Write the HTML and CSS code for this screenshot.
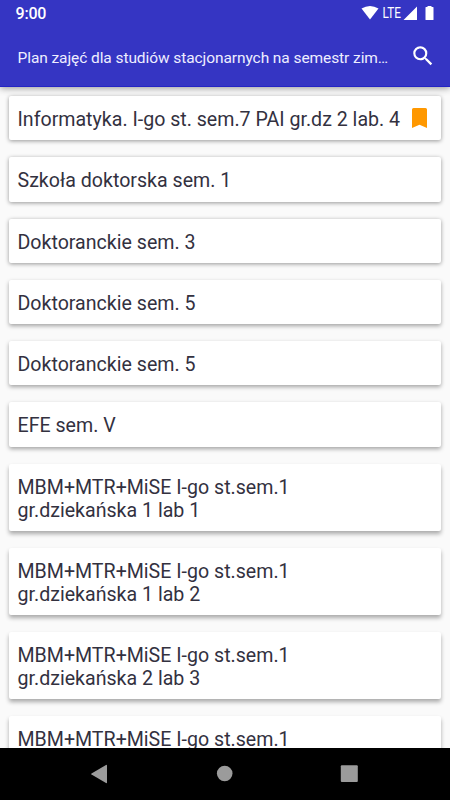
FILE: index.html
```html
<!DOCTYPE html>
<html lang="pl">
<head>
<meta charset="utf-8">
<title>Plan zajęć</title>
<link rel="stylesheet" href="styles.css">
</head>
<body>
<header class="top">
  <div class="status">
    <span class="time">9:00</span>
    <svg class="signals" width="76" height="20" viewBox="0 0 76 20" fill="#fff">
      <path d="M1.500 4.500Q10 -.500 18.500 4.500L10 15.500Z"/>
      <path d="M57 2.500V16H43.500ZM65.500 3h2V2h4v1h1.500q.5 0 .5.500v12q0 .5-.5.500h-7q-.5 0-.5-.5v-12q0-.5.500-.5Z"/>
      <text class="lte" x="22.500" y="14" textLength="18.500" lengthAdjust="spacingAndGlyphs">LTE</text>
    </svg>
  </div>
  <div class="bar">
    <h1 class="title">Plan zajęć dla studiów stacjonarnych na semestr zim…</h1>
    <svg class="search" width="26" height="26" viewBox="0 0 24 24" fill="#fff"><path d="M15.500 14h-.79l-.28-.27A6.471 6.471 0 0 0 16 9.500 6.500 6.500 0 1 0 9.500 16c1.610 0 3.090-.59 4.230-1.570l.27.28v.79l5 4.990L20.490 19l-4.990-5zm-6 0C7.010 14 5 11.990 5 9.500S7.010 5 9.500 5 14 7.010 14 9.500 11.990 14 9.500 14z"/></svg>
  </div>
</header>
<main class="list">
  <div class="card low"><span>Informatyka. I-go st. sem.7 PAI gr.dz 2 lab. 4</span>
    <svg class="mark" width="15" height="20" viewBox="0 0 15 20" fill="#ff9800"><path d="M1.500 0h12Q15 0 15 1.500V20L7.500 16.800 0 20V1.500Q0 0 1.500 0Z"/></svg></div>
  <div class="card low">Szkoła doktorska sem. 1</div>
  <div class="card low">Doktoranckie sem. 3</div>
  <div class="card">Doktoranckie sem. 5</div>
  <div class="card">Doktoranckie sem. 5</div>
  <div class="card">EFE sem. V</div>
  <div class="card deep">MBM+MTR+MiSE I-go st.sem.1<br>gr.dziekańska 1 lab 1</div>
  <div class="card deep">MBM+MTR+MiSE I-go st.sem.1<br>gr.dziekańska 1 lab 2</div>
  <div class="card deep">MBM+MTR+MiSE I-go st.sem.1<br>gr.dziekańska 2 lab 3</div>
  <div class="card deep">MBM+MTR+MiSE I-go st.sem.1</div>
</main>
<nav class="nav">
  <svg width="450" height="52" viewBox="0 0 450 52" fill="#9b9b9b"><path d="M107 17.500v17q0 1-1 .5L91.500 26.500q-.8-.5 0-1L106 17q1-.5 1 .5Z"/><circle cx="224.700" cy="25.500" r="7.800"/><rect x="340.800" y="17.200" width="17" height="16.800" rx="1"/></svg>
</nav>
</body>
</html>
```

FILE: styles.css
```css
* { box-sizing: border-box; }
body {
  margin: 0;
  width: 450px;
  height: 800px;
  overflow: hidden;
  display: flex;
  flex-direction: column;
  background: #fafafa;
  color: #33313f;
  font-family: Roboto, sans-serif;
}
.top {
  flex: none;
  height: 87px;
  background: #3535c3;
  border-bottom: 1px solid #2424c4;
  box-shadow: 0 1px 7px rgba(0, 0, 0, .42);
  color: #fff;
  position: relative;
}
.status {
  height: 27px;
  padding: 4px 15px 0 15.500px;
  display: flex;
  justify-content: space-between;
}
.time { font-size: 16px; line-height: 20px; font-weight: 500; letter-spacing: -.2px; }
.signals { margin-right: -1px; }
.lte { font-size: 14.500px; font-weight: 400; }
.bar {
  height: 60px;
  padding: 0 14px 0 17.500px;
  display: flex;
  align-items: center;
  justify-content: space-between;
}
.search { margin: -3px 0 0 0; }
.title {
  margin: 1px 0 0;
  font-size: 15.500px;
  letter-spacing: -.08px;
  font-weight: 400;
  color: #eeeeff;
  white-space: nowrap;
}
.list {
  flex: 1;
  min-height: 0;
  overflow: hidden;
  padding: 9px 9px 0;
  display: flex;
  flex-direction: column;
  gap: 17px;
}
.card {
  flex: none;
  min-height: 44.300px;
  padding: 12px 9px 9px 8.500px;
  display: flow-root;
  background: #fff;
  border-radius: 2px;
  box-shadow: 0 2px 4px rgba(0, 0, 0, .35);
  font-size: 19.600px;
  line-height: 23px;
  white-space: nowrap;
}
.low { box-shadow: 0 1px 4px rgba(0, 0, 0, .4); }
.card:first-child {
  display: flex;
  justify-content: space-between;
  padding-right: 14px;
}
.deep {
  height: 67px;
  box-shadow: 0 3px 4px rgba(0, 0, 0, .32);
}
.nav { flex: none; height: 52px; background: #000; position: relative; }
.nav svg { display: block; }
```
